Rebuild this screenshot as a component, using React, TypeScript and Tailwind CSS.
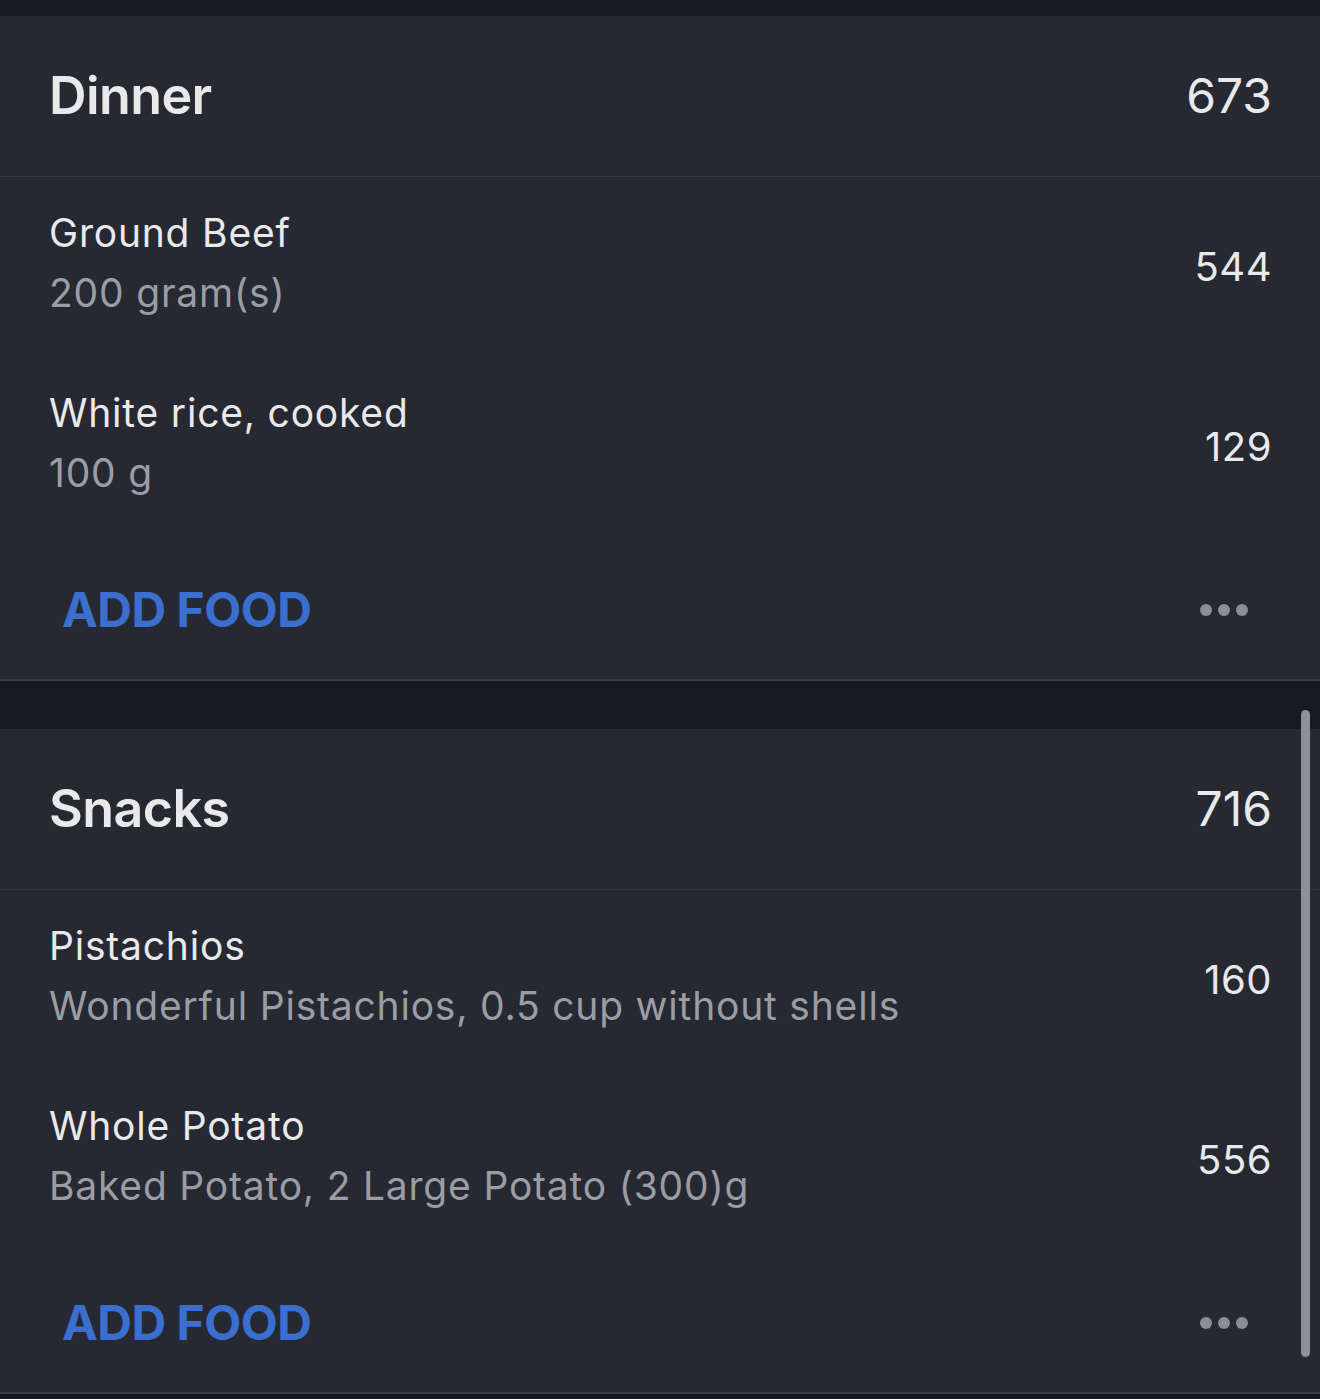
import React from 'react'

type Food = {
  name: string
  detail: string
  calories: number
}

type Meal = {
  title: string
  total: number
  foods: Food[]
}

const meals: Meal[] = [
  {
    title: 'Dinner',
    total: 673,
    foods: [
      { name: 'Ground Beef', detail: '200 gram(s)', calories: 544 },
      { name: 'White rice, cooked', detail: '100 g', calories: 129 },
    ],
  },
  {
    title: 'Snacks',
    total: 716,
    foods: [
      { name: 'Pistachios', detail: 'Wonderful Pistachios, 0.5 cup without shells', calories: 160 },
      { name: 'Whole Potato', detail: 'Baked Potato, 2 Large Potato (300)g', calories: 556 },
    ],
  },
]

function MealCard({ meal }: { meal: Meal }) {
  return (
    <section className="bg-[#262932] border-b-2 border-[#3a3d46]">
      <div className="flex items-center justify-between h-[161px] pl-[49px] pr-[48px] border-b border-[#353841]">
        <h2 className="text-[52px] font-semibold text-[#e9e9eb] tracking-[-0.6px]">{meal.title}</h2>
        <span className="text-[48px] text-[#e9e9eb]">{meal.total}</span>
      </div>
      {meal.foods.map((food) => (
        <div key={food.name} className="flex items-center justify-between h-[180px] pl-[49px] pr-[48px]">
          <div className="flex flex-col gap-[14px] pb-[8px]">
            <span className="text-[39px] leading-[46px] text-[#e9e9eb] tracking-[0.8px]">{food.name}</span>
            <span className="text-[39px] leading-[46px] text-[#9b9da4] tracking-[0.8px]">{food.detail}</span>
          </div>
          <span className="text-[40px] text-[#e9e9eb] tracking-[0.5px]">{food.calories}</span>
        </div>
      ))}
      <div className="flex items-center justify-between h-[142px] pl-[62px] pr-[72px]">
        <button className="text-[48px] font-bold text-[#3a6fcf] tracking-[-0.5px] pt-[3px]">ADD FOOD</button>
        <div className="flex gap-[6px] pt-[3px]">
          <span className="w-[12px] h-[12px] rounded-full bg-[#8c8e96]" />
          <span className="w-[12px] h-[12px] rounded-full bg-[#8c8e96]" />
          <span className="w-[12px] h-[12px] rounded-full bg-[#8c8e96]" />
        </div>
      </div>
    </section>
  )
}

export default function App() {
  return (
    <div className="relative w-[1320px] h-[1399px] overflow-hidden bg-[#161923] pt-[16px] font-['Inter','Liberation_Sans',sans-serif]">
      <MealCard meal={meals[0]} />
      <div className="h-[48px]" />
      <MealCard meal={meals[1]} />
      <div className="absolute left-[1301px] top-[710px] w-[9px] h-[647px] rounded-full bg-[#8e9098]" />
    </div>
  )
}
